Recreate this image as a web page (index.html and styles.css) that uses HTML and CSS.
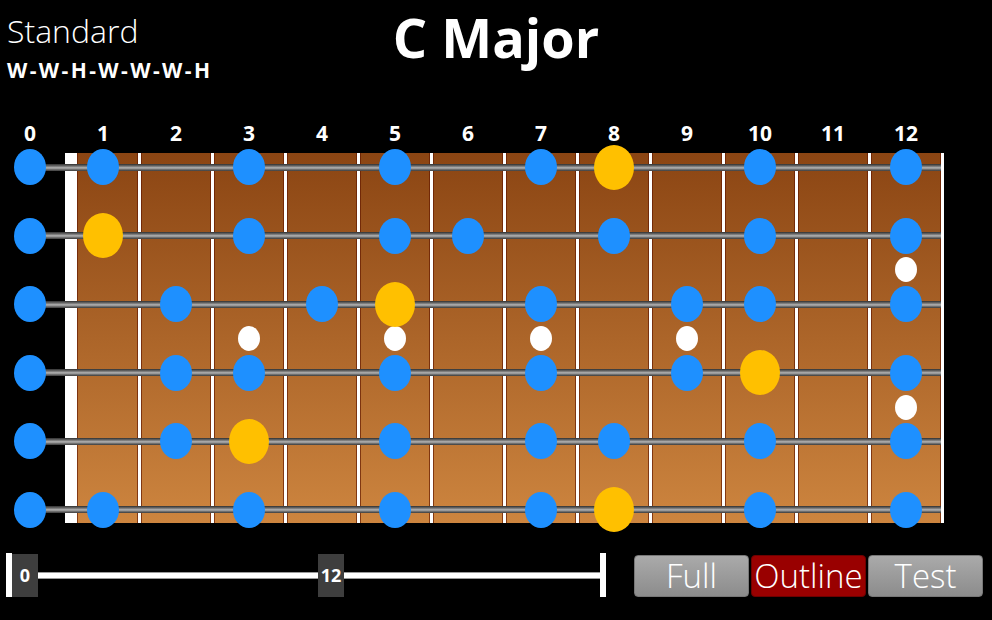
FILE: index.html
```html
<!DOCTYPE html>
<html lang="en">
<head>
<meta charset="utf-8">
<title>C Major</title>
<link rel="stylesheet" href="styles.css">
</head>
<body>
<div class="page">
  <header class="top">
    <div class="tuning">
      <div class="tname">Standard</div>
      <div class="pattern">W-W-H-W-W-W-H</div>
    </div>
    <h1 class="title">C Major</h1>
    <div class="spacer"></div>
  </header>

  <div class="fretnums">
    <span>0</span><span>1</span><span>2</span><span>3</span><span>4</span><span>5</span><span>6</span><span>7</span><span>8</span><span>9</span><span>10</span><span>11</span><span>12</span>
  </div>

  <div class="neck">
    <div class="board">
      <div class="nut"></div>
      <div class="fret first"></div>
      <div class="fret"></div>
      <div class="fret"></div>
      <div class="fret"></div>
      <div class="fret"></div>
      <div class="fret"></div>
      <div class="fret"></div>
      <div class="fret"></div>
      <div class="fret"></div>
      <div class="fret"></div>
      <div class="fret"></div>
      <div class="fret"></div>
    </div>

    <div class="markers">
      <i class="m f3 r4"></i>
      <i class="m f5 r4"></i>
      <i class="m f7 r4"></i>
      <i class="m f9 r4"></i>
      <i class="m f12 r3"></i>
      <i class="m f12 r5"></i>
    </div>

    <div class="strings">
      <div class="string">
        <i class="dot f0"></i><i class="dot f1"></i><i class="dot f3"></i><i class="dot f5"></i><i class="dot f7"></i><i class="dot root f8"></i><i class="dot f10"></i><i class="dot f12"></i>
      </div>
      <div class="string">
        <i class="dot f0"></i><i class="dot root f1"></i><i class="dot f3"></i><i class="dot f5"></i><i class="dot f6"></i><i class="dot f8"></i><i class="dot f10"></i><i class="dot f12"></i>
      </div>
      <div class="string">
        <i class="dot f0"></i><i class="dot f2"></i><i class="dot f4"></i><i class="dot root f5"></i><i class="dot f7"></i><i class="dot f9"></i><i class="dot f10"></i><i class="dot f12"></i>
      </div>
      <div class="string">
        <i class="dot f0"></i><i class="dot f2"></i><i class="dot f3"></i><i class="dot f5"></i><i class="dot f7"></i><i class="dot f9"></i><i class="dot root f10"></i><i class="dot f12"></i>
      </div>
      <div class="string">
        <i class="dot f0"></i><i class="dot f2"></i><i class="dot root f3"></i><i class="dot f5"></i><i class="dot f7"></i><i class="dot f8"></i><i class="dot f10"></i><i class="dot f12"></i>
      </div>
      <div class="string">
        <i class="dot f0"></i><i class="dot f1"></i><i class="dot f3"></i><i class="dot f5"></i><i class="dot f7"></i><i class="dot root f8"></i><i class="dot f10"></i><i class="dot f12"></i>
      </div>
    </div>
  </div>

  <div class="controls">
    <div class="slider">
      <span class="end"></span>
      <span class="knob">0</span>
      <span class="track a"></span>
      <span class="knob">12</span>
      <span class="track b"></span>
      <span class="end"></span>
    </div>
    <div class="modes">
      <button class="mode">Full</button>
      <button class="mode on">Outline</button>
      <button class="mode">Test</button>
    </div>
  </div>
</div>
</body>
</html>
```

FILE: styles.css
```css
html, body {
  margin: 0;
  padding: 0;
  background: #000;
}

body {
  width: 992px;
  height: 620px;
  overflow: hidden;
  color: #fff;
  font-family: "Open Sans", "DejaVu Sans", sans-serif;
}

.page {
  width: 992px;
}

/* ---------- header ---------- */
.top {
  display: grid;
  grid-template-columns: 1fr auto 1fr;
  height: 121px;
}

.tuning {
  padding: 12px 0 0 7px;
}

.tname {
  font-size: 32px;
  font-weight: 300;
  line-height: 38px;
}

.pattern {
  margin-top: 8px;
  font-size: 21px;
  font-weight: 700;
  line-height: 24px;
  letter-spacing: 2.4px;
}

.title {
  margin: 7px 0 0;
  font-size: 54px;
  font-weight: 700;
  line-height: 60px;
}

/* ---------- fret numbers ---------- */
.fretnums {
  display: grid;
  grid-template-columns: repeat(13, 73px);
  margin: 0 0 8px -6.5px;
  font-size: 21px;
  font-weight: 700;
  line-height: 24px;
  text-align: center;
}

/* ---------- neck ---------- */
.neck {
  display: grid;
  height: 370px;
}

.board,
.markers,
.strings {
  grid-area: 1 / 1;
}

.board {
  justify-self: start;
  display: flex;
  margin-left: 65px;
  background: linear-gradient(#8b4513, #cd853f);
}

.nut {
  width: 12px;
  background: #fff;
}

.fret {
  width: 70px;
  border-right: 3px solid #fff;
  box-shadow: inset 1px 0 0 rgba(100, 25, 0, 0.7), inset -1px 0 0 rgba(100, 25, 0, 0.7);
}

.fret.first {
  width: 61px;
}

.markers {
  display: grid;
  grid-template-columns: repeat(13, 73px);
  grid-template-rows: 14px repeat(5, 68.6px) 13px;
  margin-left: -6.5px;
}

.m {
  place-self: center;
  width: 22px;
  height: 25px;
  border-radius: 50%;
  background: #fff;
}

.r3 { grid-row: 3; }
.r4 { grid-row: 4; }
.r5 { grid-row: 5; }

.strings {
  display: flex;
  flex-direction: column;
  justify-content: space-between;
  box-sizing: border-box;
  padding: 10.5px 0 9.5px;
}

.string {
  display: grid;
  grid-template-columns: repeat(13, 73px);
  height: 7px;
  margin-left: -6.5px;
  background: linear-gradient(#303030, #6e6e6e 30%, #b5b5b5 55%, #6a6a6a 80%, #3a3a3a) 36.5px 0 / 911px 100% no-repeat;
}

.dot {
  grid-row: 1;
  justify-self: center;
  width: 32px;
  height: 36px;
  margin: -14.5px 0;
  border-radius: 50%;
  background: #1e90ff;
}

.dot.root {
  width: 40px;
  height: 45px;
  margin: -19px 0;
  background: #ffc000;
}

.f0 { grid-column: 1; }
.f1 { grid-column: 2; }
.f2 { grid-column: 3; }
.f3 { grid-column: 4; }
.f4 { grid-column: 5; }
.f5 { grid-column: 6; }
.f6 { grid-column: 7; }
.f7 { grid-column: 8; }
.f8 { grid-column: 9; }
.f9 { grid-column: 10; }
.f10 { grid-column: 11; }
.f11 { grid-column: 12; }
.f12 { grid-column: 13; }

/* ---------- controls ---------- */
.controls {
  display: flex;
  justify-content: space-between;
  align-items: flex-end;
  height: 44px;
  margin-top: 30px;
  padding: 0 9px 0 6px;
}

.slider {
  display: flex;
  align-items: center;
  height: 44px;
}

.end {
  width: 6px;
  height: 44px;
  background: #fff;
}

.knob {
  display: flex;
  align-items: center;
  justify-content: center;
  width: 26px;
  height: 43px;
  background: #3e3e3e;
  font-size: 18px;
  font-weight: 700;
}

.track {
  height: 5px;
  background: #fff;
  border-top: 1px solid #9a9a9a;
  border-bottom: 1px solid #9a9a9a;
}

.track.a { width: 280px; }
.track.b { width: 256px; }

.modes {
  display: flex;
  gap: 2px;
}

.mode {
  box-sizing: border-box;
  width: 115px;
  height: 42px;
  padding: 0;
  border: 1px solid #777;
  border-radius: 4px;
  background: linear-gradient(#aaaaaa, #8c8c8c);
  color: #fff;
  font-family: inherit;
  font-size: 33px;
  font-weight: 300;
  line-height: 40px;
  text-align: center;
}

.mode.on {
  background: #990000;
  border-color: #6e0000;
}
```
